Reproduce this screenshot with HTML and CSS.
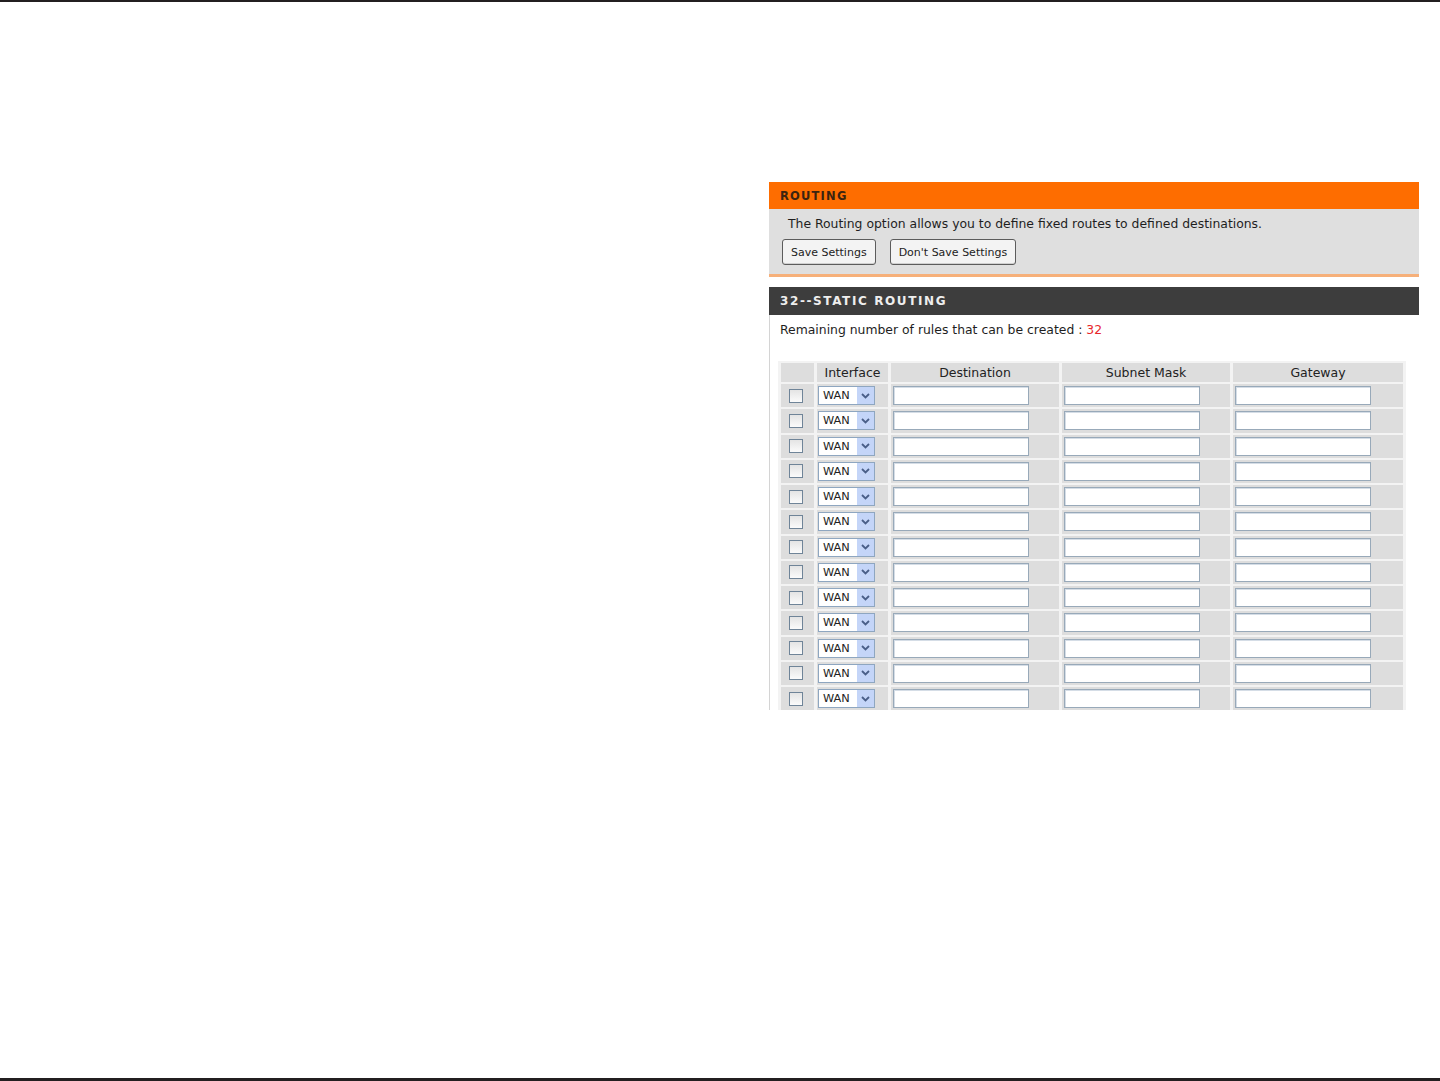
FILE: index.html
```html
<!DOCTYPE html>
<html>
<head>
<meta charset="utf-8">
<link rel="stylesheet" href="styles.css">
</head>
<body>
<div class="page">
  <div class="rule rule-top"></div>
  <div class="panel">
    <div class="box-title">ROUTING</div>
    <div class="box-body">
      <p class="intro">The Routing option allows you to define fixed routes to defined destinations.</p>
      <div class="buttons">
        <span class="btn">Save Settings</span>
        <span class="btn">Don't Save Settings</span>
      </div>
    </div>
    <div class="section">
      <div class="section-title">32--STATIC ROUTING</div>
      <p class="remaining">Remaining number of rules that can be created : <span class="count">32</span></p>
      <table class="rules">
        <thead>
          <tr>
            <th class="c-cb"></th>
            <th class="c-if">Interface</th>
            <th class="c-ip">Destination</th>
            <th class="c-ip">Subnet Mask</th>
            <th class="c-gw">Gateway</th>
          </tr>
        </thead>
        <tbody id="rows"></tbody>
      </table>
    </div>
  </div>
  <div class="rule rule-bottom"></div>
</div>
<script>
  var tb = document.getElementById('rows');
  var html = '';
  for (var i = 0; i < 13; i++) {
    html += '<tr>' +
      '<td class="c-cb"><span class="cb"></span></td>' +
      '<td class="c-if"><span class="sel"><span class="sel-text">WAN</span><span class="sel-btn"><svg width="9" height="6" viewBox="0 0 9 6"><path d="M1 1 L4.5 4.5 L8 1" fill="none" stroke="#4a5f88" stroke-width="1.8"/></svg></span></span></td>' +
      '<td class="c-ip"><span class="inp"></span></td>' +
      '<td class="c-ip"><span class="inp"></span></td>' +
      '<td class="c-gw"><span class="inp"></span></td>' +
      '</tr>';
  }
  tb.innerHTML = html;
</script>
</body>
</html>
```

FILE: styles.css
```css
html, body {
  margin: 0;
  padding: 0;
  background: #ffffff;
}

.page {
  width: 1440px;
  height: 1081px;
  display: flex;
  flex-direction: column;
  font-family: "DejaVu Sans", Verdana, sans-serif;
  color: #222222;
}

.rule {
  background: #231f20;
  flex: none;
}

.rule-top {
  height: 2px;
}

.rule-bottom {
  height: 3px;
  margin-top: auto;
}

.panel {
  margin-top: 180px;
  margin-left: 769px;
  width: 650px;
  height: 528px;
  overflow: hidden;
}

.box-title {
  height: 27px;
  background: #fe6d00;
  color: #3b2410;
  font-size: 11.5px;
  font-weight: bold;
  letter-spacing: 1.2px;
  line-height: 29px;
  padding-left: 11px;
}

.box-body {
  background: #dfdfdf;
  height: 65px;
  border-bottom: 3px solid #f6b07a;
  padding-left: 19px;
}

.intro {
  margin: 0;
  padding-top: 7px;
  font-size: 12.4px;
  line-height: 16px;
  color: #1e1e1e;
}

.buttons {
  display: flex;
  gap: 14px;
  margin-top: 7px;
  margin-left: -6px;
}

.btn {
  display: inline-flex;
  align-items: center;
  height: 24px;
  padding: 0 8px;
  border: 1px solid #5c5c5c;
  border-radius: 3px;
  background: #f3f3f3;
  font-size: 11px;
  color: #222;
  box-shadow: inset 0 -1px 0 #d0d0d0;
}

.section {
  margin-top: 10px;
  border-left: 1px solid #d4d4d4;
  height: 500px;
}

.section-title {
  height: 28px;
  margin-left: -1px;
  background: #3d3d3d;
  color: #eeeeee;
  font-size: 12px;
  font-weight: bold;
  letter-spacing: 1.6px;
  line-height: 29px;
  padding-left: 11px;
}

.remaining {
  margin: 7px 0 0 10px;
  font-size: 12.4px;
  line-height: 16px;
  height: 16px;
  color: #1e1e1e;
}

.count {
  color: #e8262c;
}

.rules {
  margin-top: 23px;
  margin-left: 8px;
  border-collapse: separate;
  border-spacing: 3px 2px;
  background: #f3f3f3;
  font-size: 12.5px;
}

.rules th,
.rules td {
  background: #dddddd;
  padding: 0;
}

.rules th {
  height: 19px;
  font-weight: normal;
  color: #222;
  text-align: center;
  line-height: 19px;
}

.rules td {
  height: 23.25px;
  vertical-align: middle;
}

.c-cb { width: 33px; }
.c-if { width: 71px; }
.c-ip { width: 168px; }
.c-gw { width: 170px; }

.rules td.c-cb {
  text-align: left;
}

.cb {
  display: block;
  width: 12px;
  height: 12px;
  margin-left: 8px;
  border: 1px solid #6f8498;
  background: linear-gradient(#e4e4e4, #fbfbfb);
}

.sel {
  display: flex;
  align-items: stretch;
  width: 55px;
  height: 17px;
  margin-left: 1px;
  border: 1px solid #8ea6c0;
  background: #ffffff;
}

.sel-text {
  flex: 1;
  font-size: 11.3px;
  line-height: 17px;
  padding-left: 4px;
  color: #222;
}

.sel-btn {
  width: 17px;
  background: #c4d5f8;
  display: flex;
  align-items: center;
  justify-content: center;
}

.inp {
  display: block;
  width: 134px;
  height: 17px;
  margin-left: 2px;
  border: 1px solid #98a9b9;
  box-shadow: inset 1px 1px 0 #d5dde6;
  background: #ffffff;
}
```
